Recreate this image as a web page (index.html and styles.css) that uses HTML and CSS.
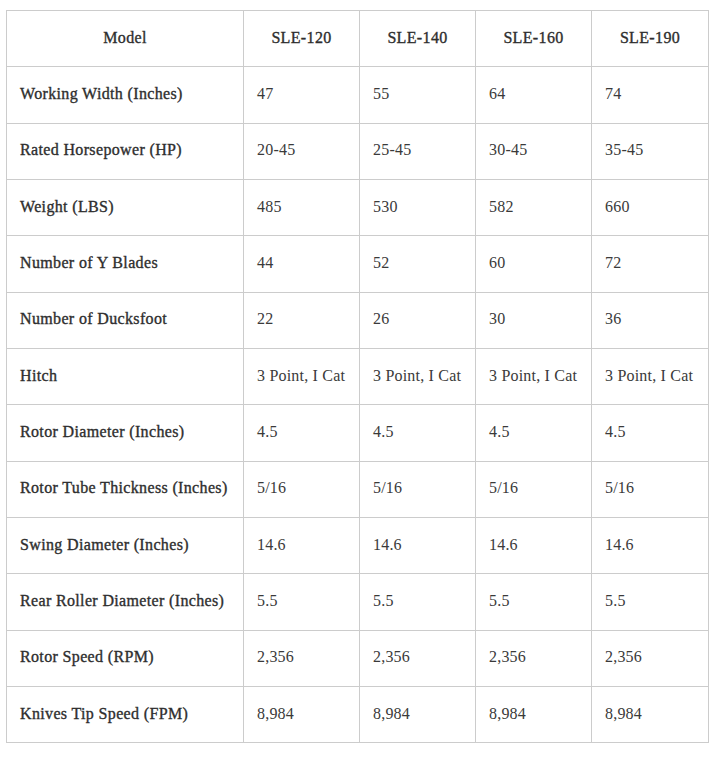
FILE: index.html
```html
<!DOCTYPE html>
<html>
<head>
<meta charset="utf-8">
<link rel="stylesheet" href="styles.css">
</head>
<body>
<table class="spec">
<colgroup>
<col class="c-label"><col class="c-val"><col class="c-val"><col class="c-val"><col class="c-last">
</colgroup>
<thead>
<tr><th class="head center">Model</th><th class="head center">SLE-120</th><th class="head center">SLE-140</th><th class="head center">SLE-160</th><th class="head center">SLE-190</th></tr>
</thead>
<tbody>
<tr><th class="label">Working Width (Inches)</th><td>47</td><td>55</td><td>64</td><td>74</td></tr>
<tr><th class="label">Rated Horsepower (HP)</th><td>20-45</td><td>25-45</td><td>30-45</td><td>35-45</td></tr>
<tr><th class="label">Weight (LBS)</th><td>485</td><td>530</td><td>582</td><td>660</td></tr>
<tr><th class="label">Number of Y Blades</th><td>44</td><td>52</td><td>60</td><td>72</td></tr>
<tr><th class="label">Number of Ducksfoot</th><td>22</td><td>26</td><td>30</td><td>36</td></tr>
<tr><th class="label">Hitch</th><td>3 Point, I Cat</td><td>3 Point, I Cat</td><td>3 Point, I Cat</td><td>3 Point, I Cat</td></tr>
<tr><th class="label">Rotor Diameter (Inches)</th><td>4.5</td><td>4.5</td><td>4.5</td><td>4.5</td></tr>
<tr><th class="label">Rotor Tube Thickness (Inches)</th><td>5/16</td><td>5/16</td><td>5/16</td><td>5/16</td></tr>
<tr><th class="label">Swing Diameter (Inches)</th><td>14.6</td><td>14.6</td><td>14.6</td><td>14.6</td></tr>
<tr><th class="label">Rear Roller Diameter (Inches)</th><td>5.5</td><td>5.5</td><td>5.5</td><td>5.5</td></tr>
<tr><th class="label">Rotor Speed (RPM)</th><td>2,356</td><td>2,356</td><td>2,356</td><td>2,356</td></tr>
<tr><th class="label">Knives Tip Speed (FPM)</th><td>8,984</td><td>8,984</td><td>8,984</td><td>8,984</td></tr>
</tbody>
</table>
</body>
</html>
```

FILE: styles.css
```css
html, body {
  margin: 0;
  padding: 0;
  background: #fff;
}
body {
  padding: 10px 0 0 6px;
  font-family: "Liberation Serif", "DejaVu Serif", serif;
  color: #333;
}
.spec {
  border-collapse: collapse;
  table-layout: fixed;
  width: 702px;
  font-size: 16px;
}
.c-label { width: 237px; }
.c-val { width: 116px; }
.c-last { width: 117px; }
.spec th, .spec td {
  border: 1px solid #ccc;
  height: 56.33px;
  padding: 0 13px 2px;
  box-sizing: border-box;
  text-align: left;
  vertical-align: middle;
  white-space: nowrap;
}
.spec th {
  font-weight: normal;
  letter-spacing: 0.35px;
  color: #2e2e2e;
  -webkit-text-stroke: 0.35px #2e2e2e;
}
.spec td {
  font-weight: normal;
  letter-spacing: 0.2px;
  color: #3a3a3a;
}
.spec .center {
  text-align: center;
}
```
